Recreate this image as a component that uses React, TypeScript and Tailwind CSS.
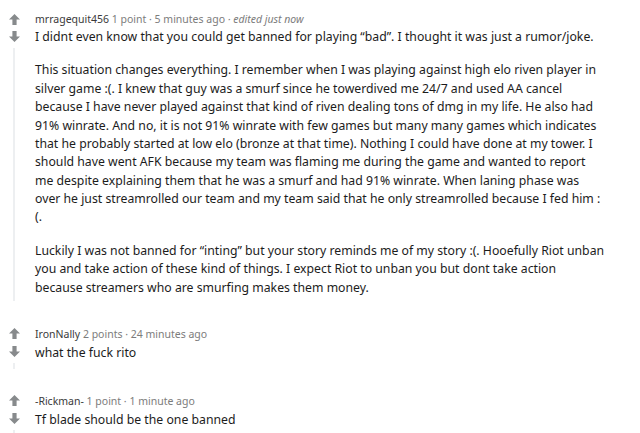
import React from "react"

const Arrow = ({ down = false }: { down?: boolean }) => (
  <svg width="11" height="11" viewBox="0 0 11 11" className={down ? "rotate-180" : ""}>
    <path d="M5.5 0 L11 5.6 H7.6 V11 H3.4 V5.6 H0 Z" fill="#878a8c" />
  </svg>
)

type CommentProps = {
  user: string
  points: string
  time: string
  edited?: boolean
  children: React.ReactNode
  className?: string
  lineClass?: string
}

const Comment = ({ user, points, time, edited, children, className = "", lineClass = "" }: CommentProps) => {
  return (
    <div className={`flex ${className}`}>
      <div className="flex w-[28px] shrink-0 flex-col items-center">
        <div className="flex h-[16px] items-center">
          <Arrow />
        </div>
        <div className="flex h-[19px] items-center">
          <Arrow down />
        </div>
        <div className={`mt-[2px] w-[2px] bg-[#edeff1] ${lineClass}`} />
      </div>
      <div className="ml-[7px] w-[571px] pb-[4px]">
        <div className="h-[16px] text-[10.5px] leading-[16px] text-[#7c7c7c]">
          <span className="text-[#3a3a3a]">{user}</span> {points} · {time}
          {edited && <span className="italic"> · edited just now</span>}
        </div>
        <div className="text-[12.25px] leading-[18.375px] text-[#1c1c1c]">{children}</div>
      </div>
    </div>
  )
}

const App = () => {
  return (
    <div className="h-[433px] w-[640px] overflow-hidden bg-white pt-[11px] font-['Noto_Sans',sans-serif]">
      <Comment user="mrragequit456" points="1 point" time="5 minutes ago" edited lineClass="flex-1">
        <p className="mb-[15px] pt-[1px]">
          I didnt even know that you could get banned for playing “bad”. I thought it was just a rumor/joke.
        </p>
        <p className="mb-[15px]">
          This situation changes everything. I remember when I was playing against high elo riven player in silver
          game :(. I knew that guy was a smurf since he towerdived me 24/7 and used AA cancel because I have never
          played against that kind of riven dealing tons of dmg in my life. He also had 91% winrate. And no, it is not
          91% winrate with few games but many many games which indicates that he probably started at low elo (bronze at
          that time). Nothing I could have done at my tower. I should have went AFK because my team was flaming me
          during the game and wanted to report me despite explaining them that he was a smurf and had 91% winrate.
          When laning phase was over he just streamrolled our team and my team said that he only streamrolled because I
          fed him : (.
        </p>
        <p>
          Luckily I was not banned for “inting” but your story reminds me of my story :(. Hooefully Riot unban you and
          take action of these kind of things. I expect Riot to unban you but dont take action because streamers who
          are smurfing makes them money.
        </p>
      </Comment>
      <Comment user="IronNally" points="2 points" time="24 minutes ago" className="mt-[25px]" lineClass="h-[6px]">
        <p className="pt-[2px]">what the fuck rito</p>
      </Comment>
      <Comment user="-Rickman-" points="1 point" time="1 minute ago" className="mt-[24px]" lineClass="h-[6px]">
        <p className="pt-[2px]">Tf blade should be the one banned</p>
      </Comment>
    </div>
  )
}

export default App
